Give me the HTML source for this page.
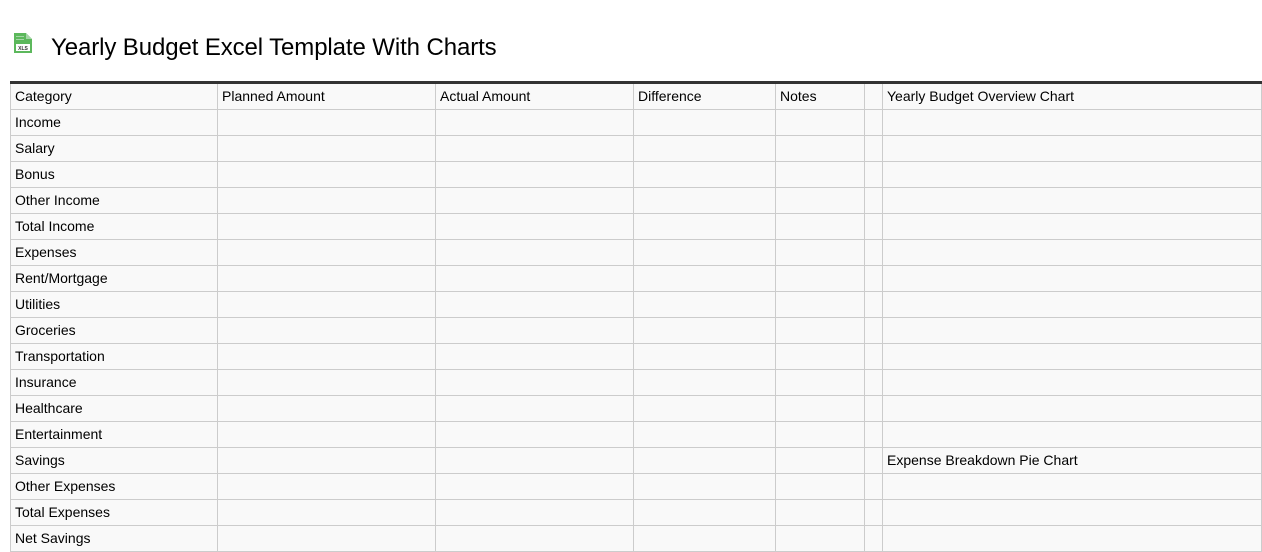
<!DOCTYPE html>
<html><head><style>
body{margin:0;background:#fff;font-family:"Liberation Sans",Arial,sans-serif;width:1262px;height:552px;overflow:hidden;position:relative}
h1{position:absolute;left:51px;top:33px;margin:0;font-size:24px;font-weight:normal;color:#000;line-height:30px;letter-spacing:-0.1px}
.ic{position:absolute;left:13px;top:32px}
table{position:absolute;left:10px;top:81px;width:1252px;border-collapse:collapse;border-top:3px solid #333;table-layout:fixed}
td{border:1px solid #ccc;height:23px;padding:0 0 2px 4px;font-size:14px;color:#000;background:#f9f9f9;white-space:nowrap;overflow:hidden}
</style></head><body>
<svg class="ic" width="20" height="22" viewBox="0 0 20 22"><path d="M1 1h12l6 6v14H1z" fill="#5cb85c"/><path d="M13 1v6h6z" fill="#a5d6a7"/><rect x="3" y="4" width="8" height="1" fill="#a5d6a7"/><rect x="3" y="7" width="8" height="1" fill="#a5d6a7"/><rect x="3" y="12" width="14" height="7" fill="#fff"/><text x="10" y="18" font-size="5" text-anchor="middle" font-family="Liberation Sans" font-weight="bold" fill="#333">XLS</text></svg>
<h1>Yearly Budget Excel Template With Charts</h1>
<table>
<colgroup><col style="width:207px"><col style="width:218px"><col style="width:198px"><col style="width:142px"><col style="width:89px"><col style="width:18px"><col></colgroup>
<tr><td>Category</td><td>Planned Amount</td><td>Actual Amount</td><td>Difference</td><td>Notes</td><td></td><td>Yearly Budget Overview Chart</td></tr>
<tr><td>Income</td><td></td><td></td><td></td><td></td><td></td><td></td></tr>
<tr><td>Salary</td><td></td><td></td><td></td><td></td><td></td><td></td></tr>
<tr><td>Bonus</td><td></td><td></td><td></td><td></td><td></td><td></td></tr>
<tr><td>Other Income</td><td></td><td></td><td></td><td></td><td></td><td></td></tr>
<tr><td>Total Income</td><td></td><td></td><td></td><td></td><td></td><td></td></tr>
<tr><td>Expenses</td><td></td><td></td><td></td><td></td><td></td><td></td></tr>
<tr><td>Rent/Mortgage</td><td></td><td></td><td></td><td></td><td></td><td></td></tr>
<tr><td>Utilities</td><td></td><td></td><td></td><td></td><td></td><td></td></tr>
<tr><td>Groceries</td><td></td><td></td><td></td><td></td><td></td><td></td></tr>
<tr><td>Transportation</td><td></td><td></td><td></td><td></td><td></td><td></td></tr>
<tr><td>Insurance</td><td></td><td></td><td></td><td></td><td></td><td></td></tr>
<tr><td>Healthcare</td><td></td><td></td><td></td><td></td><td></td><td></td></tr>
<tr><td>Entertainment</td><td></td><td></td><td></td><td></td><td></td><td></td></tr>
<tr><td>Savings</td><td></td><td></td><td></td><td></td><td></td><td>Expense Breakdown Pie Chart</td></tr>
<tr><td>Other Expenses</td><td></td><td></td><td></td><td></td><td></td><td></td></tr>
<tr><td>Total Expenses</td><td></td><td></td><td></td><td></td><td></td><td></td></tr>
<tr><td>Net Savings</td><td></td><td></td><td></td><td></td><td></td><td></td></tr>
</table>
</body></html>
